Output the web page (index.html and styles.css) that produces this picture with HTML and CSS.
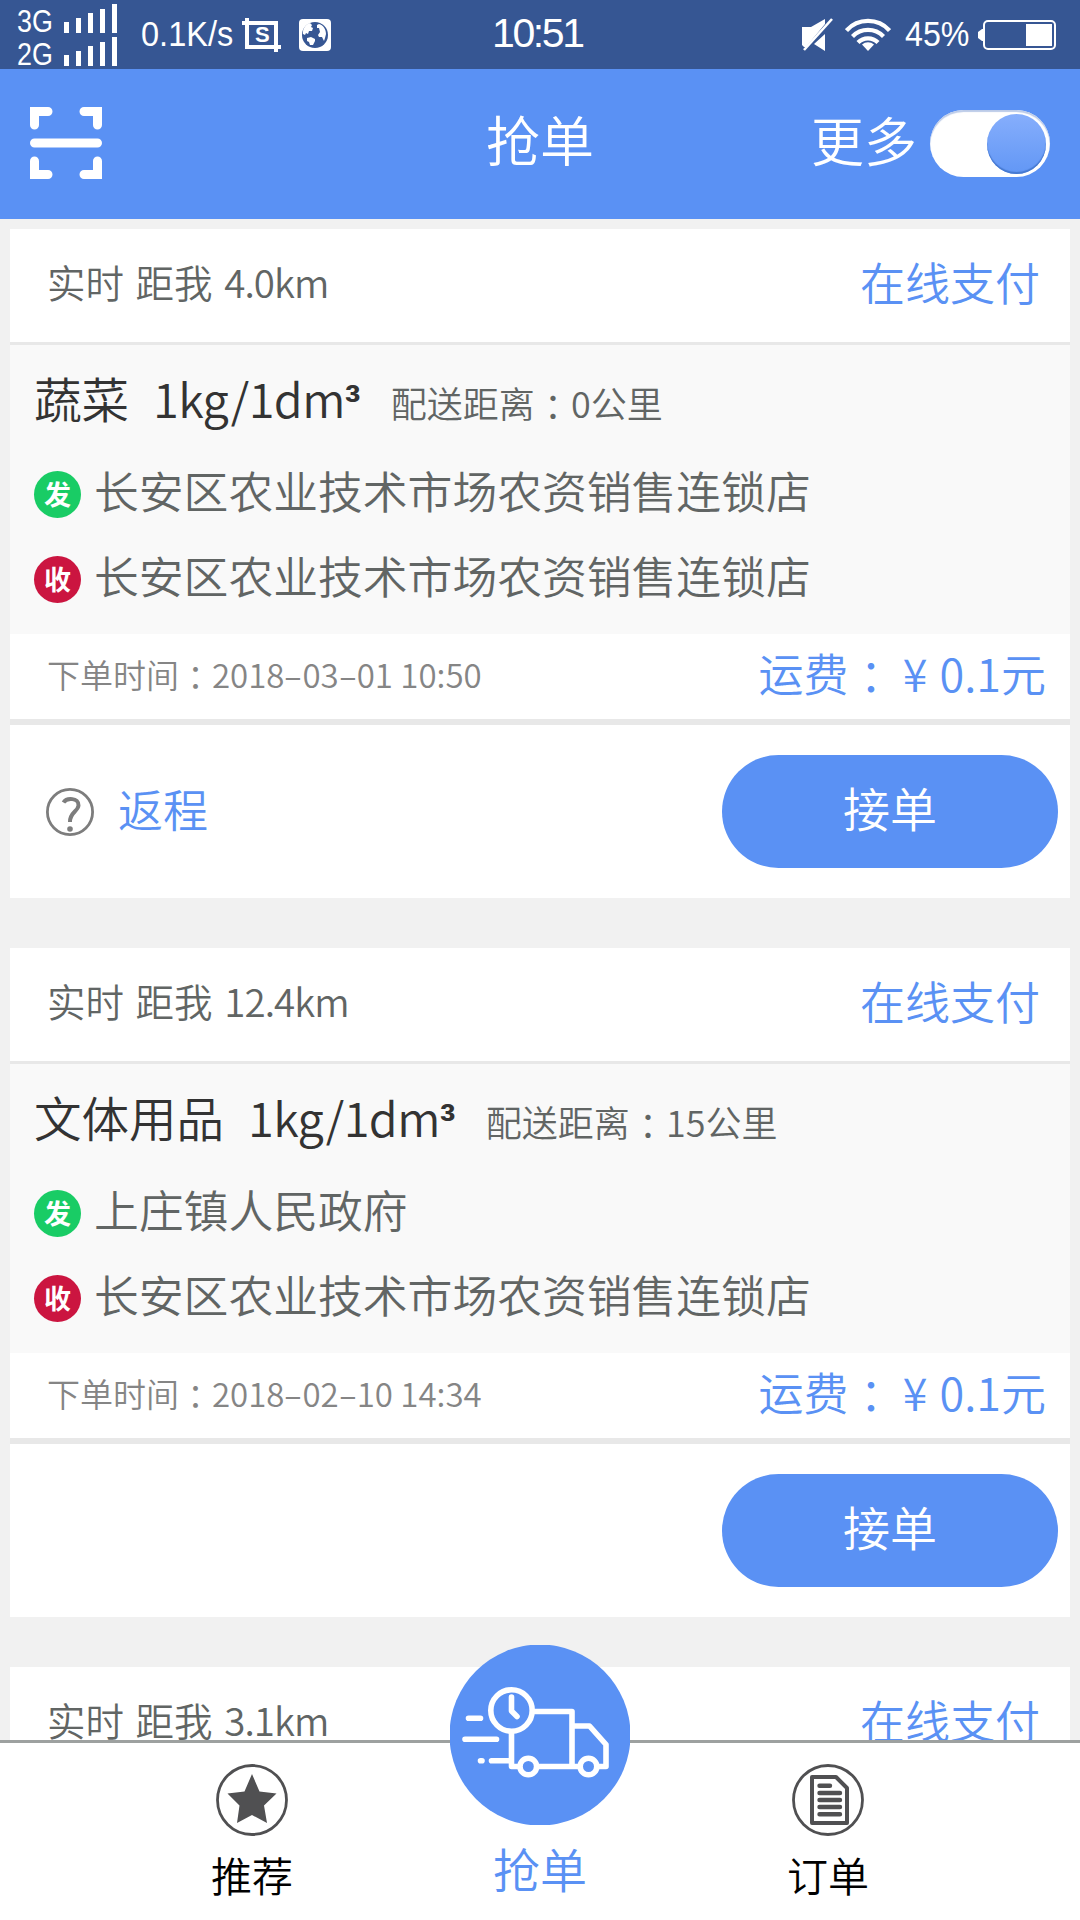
FILE: index.html
```html
<!DOCTYPE html>
<html lang="zh-CN">
<head>
  <meta charset="UTF-8">
  <meta name="viewport" content="width=device-width, initial-scale=1.0">
  <title>抢单</title>
  <link rel="stylesheet" href="styles.css">
</head>
<body>
  <div class="status-bar">
    <div class="signals">
      <div class="signal">
        <span class="net">3G</span>
        <svg width="53" height="29" viewBox="0 0 53 29" fill="#fff"><path d="M0 18h5v11H0zM12 14h5v15h-5zM24 9h5v20h-5zM36 5h5v24h-5zM48 0h5v29h-5z"/></svg>
      </div>
      <div class="signal">
        <span class="net">2G</span>
        <svg width="53" height="29" viewBox="0 0 53 29" fill="#fff"><path d="M0 18h5v11H0zM12 14h5v15h-5zM24 9h5v20h-5zM36 5h5v24h-5zM48 0h5v29h-5z"/></svg>
      </div>
    </div>
    <span class="speed">0.1K/s</span>
    <div class="shot">
      <svg width="39" height="34" viewBox="0 0 39 34" fill="none" stroke="#fff" stroke-width="4"><path d="M0 5h34v29M5 0v29h34"/></svg>
      <span>S</span>
    </div>
    <svg class="globe" width="32" height="32" viewBox="0 0 32 32">
      <rect width="32" height="32" rx="4" fill="#fff"/>
      <circle cx="16" cy="16" r="13" fill="#365693"/>
      <path fill="#fff" d="M4 13c0-4 3-8 7-9l2 2-1 2 2 1-1 3-3 0-1 3-2-1-1 2-2-1zM8 19l4-1 4 2 0 2-2 4-3 0-1-3-2-1zM20 5c4 1 7 5 7 10l-1 4-1 3-2-4-3 0-1-2 2-3-1-4-2 0 0-3z"/>
    </svg>
    <span class="clock">10:51</span>
    <div class="status-right">
      <svg class="mute" width="32" height="34" viewBox="0 0 32 34">
        <path fill="#fff" d="M0 9h9l14-8v5L4 29H2l-2-2zM23 16v17l-11-7z"/>
        <path stroke="#fff" stroke-width="2.6" d="M2 32L30 1"/>
      </svg>
      <svg class="wifi" width="46" height="34" viewBox="0 0 46 34" fill="none" stroke="#fff" stroke-width="4.2">
        <path d="M1.500 12.500a29 29 0 0 1 43 0M7.500 18.500a21.500 21.500 0 0 1 31 0M13 24.500a14 14 0 0 1 20 0"/>
        <path fill="#fff" stroke="none" d="M23 33l-6-6.500a9 9 0 0 1 12 0z"/>
      </svg>
      <span class="percent">45%</span>
      <svg width="78" height="30" viewBox="0 0 78 30">
        <path d="M5 9v12H4l-4-3v-6l4-3z" fill="#fff"/>
        <rect x="6" y="1" width="71" height="28" rx="4" fill="none" stroke="#fff" stroke-width="2"/>
        <path d="M48 4h26v22H48z" fill="#fff"/>
      </svg>
    </div>
  </div>

  <header class="header">
    <svg class="scan" width="72" height="72" viewBox="0 0 72 72" fill="none" stroke="#fff" stroke-width="9" stroke-linecap="round">
      <path d="M18 4.500H4.500V18M54 4.500h13.500V18M18 67.500H4.500V54M54 67.500h13.500V54M4.500 36h63"/>
    </svg>
    <h1>抢单</h1>
    <div class="more">
      <span>更多</span>
      <div class="toggle"><i class="knob"></i></div>
    </div>
  </header>

  <main class="orders">
    <section class="card">
      <div class="card-head">
        <span class="where">实时 距我 <span class="km">4.0km</span></span>
        <span class="pay">在线支付</span>
      </div>
      <div class="card-body">
        <div class="goods">
          <span class="name">蔬菜</span>
          <span class="size">1kg/1dm<b>³</b></span>
          <span class="distance">配送距离<span class="colon" lang="zh-TW">：</span>0公里</span>
        </div>
        <div class="addr"><b class="dot send">发</b><span>长安区农业技术市场农资销售连锁店</span></div>
        <div class="addr"><b class="dot recv">收</b><span>长安区农业技术市场农资销售连锁店</span></div>
      </div>
      <div class="card-time">
        <span class="time">下单时间<span class="colon" lang="zh-TW">：</span>2018<i>-</i>03<i>-</i>01 10:50</span>
        <span class="fee">运费<span class="colon" lang="zh-TW">：</span><span class="yen">¥</span>0.1元</span>
      </div>
      <div class="card-foot">
        <div class="back">
          <svg width="48" height="48" viewBox="0 0 48 48" fill="none" stroke="#7d7d7d">
            <circle cx="24" cy="24" r="22.600" stroke-width="2.800"/>
            <path d="M17.500 14.500c3-5 15.500-5 15 3-.5 6-9 7-8.500 16.500" stroke-width="4"/>
            <circle cx="24" cy="41" r="2.800" fill="#7d7d7d" stroke="none"/>
          </svg>
          <span>返程</span>
        </div>
        <button class="take">接单</button>
      </div>
    </section>

    <section class="card">
      <div class="card-head">
        <span class="where">实时 距我 <span class="km">12.4km</span></span>
        <span class="pay">在线支付</span>
      </div>
      <div class="card-body">
        <div class="goods">
          <span class="name">文体用品</span>
          <span class="size">1kg/1dm<b>³</b></span>
          <span class="distance">配送距离<span class="colon" lang="zh-TW">：</span>15公里</span>
        </div>
        <div class="addr"><b class="dot send">发</b><span>上庄镇人民政府</span></div>
        <div class="addr"><b class="dot recv">收</b><span>长安区农业技术市场农资销售连锁店</span></div>
      </div>
      <div class="card-time">
        <span class="time">下单时间<span class="colon" lang="zh-TW">：</span>2018<i>-</i>02<i>-</i>10 14:34</span>
        <span class="fee">运费<span class="colon" lang="zh-TW">：</span><span class="yen">¥</span>0.1元</span>
      </div>
      <div class="card-foot">
        <button class="take">接单</button>
      </div>
    </section>

    <section class="card">
      <div class="card-head">
        <span class="where">实时 距我 <span class="km">3.1km</span></span>
        <span class="pay">在线支付</span>
      </div>
    </section>
  </main>

  <nav class="tabs">
    <a class="tab">
      <svg width="72" height="72" viewBox="0 0 72 72">
        <circle cx="36" cy="36" r="34.500" fill="none" stroke="#505052" stroke-width="2.800"/>
        <path fill="#505052" d="M36 10l7.500 17.500 17 2-12.500 12 3 17.500-15-8-15 8 2.500-17.500-12-12 17-2z"/>
      </svg>
      <span>推荐</span>
    </a>
    <a class="tab active">
      <svg width="180" height="180" viewBox="0 0 180 180">
        <circle cx="90" cy="90" r="90.500" fill="#5a91f4"/>
        <g fill="none" stroke="#fff" stroke-width="5.600" stroke-linecap="round" stroke-linejoin="round">
          <circle cx="61.500" cy="65.500" r="20.700"/>
          <path d="M61.500 52v14l5.500 5.500M85 66.500h37v55M61.500 87v34.500h7M88 121.500h40M122 81h17.500l16.500 18.500v22h-7"/>
          <circle cx="78.300" cy="121.500" r="8.300"/>
          <circle cx="138.500" cy="121.500" r="8.300"/>
          <path d="M18.500 73.300h12M15 94.300h31.500M30.500 115.800h1.500M41.500 115.800h18"/>
        </g>
      </svg>
      <span>抢单</span>
    </a>
    <a class="tab">
      <svg width="72" height="72" viewBox="0 0 72 72" fill="none" stroke="#505052">
        <circle cx="36" cy="36" r="34.500" stroke-width="2.800"/>
        <path d="M20 13h24l11 11v35H20z" stroke-width="4" stroke-linejoin="round"/>
        <path d="M27.500 21.800H38M27.500 29h20.500M27.500 36h20.500M27.500 43h20.500M27.500 50.200h20.500" stroke-width="4.400" stroke-linecap="round"/>
      </svg>
      <span>订单</span>
    </a>
  </nav>
</body>
</html>
```
FILE: styles.css
```css
* {
  box-sizing: border-box;
}

body {
  margin: 0;
  height: 1920px;
  overflow: hidden;
  display: flex;
  flex-direction: column;
  background: #f1f1f1;
  color: #616564;
  font-family: "Noto Sans CJK SC", sans-serif;
  font-weight: 350;
  line-height: 1;
  white-space: nowrap;
}

svg {
  display: block;
  flex: none;
}

/* centered full-width colon */
.colon {
  display: inline-block;
  font-family: "Noto Sans CJK TC", sans-serif;
  transform: translateY(0.07em);
}

/* status bar */
.status-bar {
  position: relative;
  height: 69px;
  flex: none;
  display: flex;
  align-items: center;
  padding: 0 24px 0 17px;
  background: #365693;
  color: #fff;
  font-family: "Liberation Sans", Arial, sans-serif;
  font-weight: 400;
}

.signals {
  align-self: flex-start;
  padding-top: 4px;
}

.signal {
  display: flex;
  align-items: flex-end;
  height: 29px;
  margin-bottom: 4px;
}

.net {
  width: 47px;
  font-size: 32px;
  line-height: 23px;
  transform: scaleX(0.84);
  transform-origin: left;
}

.speed {
  width: 92px;
  margin-left: 24px;
  padding-bottom: 2px;
  font-size: 35px;
  transform: scaleX(0.93);
  transform-origin: left;
}

.shot {
  position: relative;
  margin-left: 9px;
}

.shot span {
  position: absolute;
  left: 13px;
  top: 6px;
  font-size: 22px;
  font-weight: 700;
}

.globe {
  margin-left: 18px;
}

.clock {
  position: absolute;
  left: 492px;
  top: 13px;
  font-size: 41px;
  letter-spacing: -2.4px;
}

.status-right {
  display: flex;
  align-items: center;
  margin-left: auto;
}

.wifi {
  margin-left: 11px;
}

.percent {
  width: 73px;
  margin-left: 14px;
  padding-bottom: 2px;
  font-size: 35px;
  transform: scaleX(0.92);
  transform-origin: left;
}

/* header */
.header {
  height: 150px;
  flex: none;
  display: grid;
  grid-template-columns: 1fr auto 1fr;
  align-items: center;
  padding: 0 30px 2px;
  background: #5a91f4;
  color: #fff;
}

h1 {
  margin: 0;
  padding-bottom: 8px;
  font-size: 54px;
  font-weight: 350;
}

.more {
  display: flex;
  align-items: center;
  justify-content: flex-end;
  gap: 13px;
  font-size: 53px;
}

.more span {
  padding-bottom: 8px;
}

.toggle {
  display: flex;
  justify-content: flex-end;
  width: 120px;
  height: 67px;
  padding: 4px;
  border-radius: 34px;
  background: #fff;
  box-shadow: inset 0 2px 1px #bccbe8;
}

.knob {
  width: 59px;
  height: 60px;
  border-radius: 50%;
  background: linear-gradient(#86aefc, #6297f5);
  box-shadow: inset 0 -2px 1px #4679d0;
}

/* orders */
.orders {
  flex: 1;
  min-height: 0;
  overflow: hidden;
  padding: 10px 10px 0;
}

.card {
  margin-bottom: 50px;
  background: #fff;
}

.card-head {
  display: flex;
  align-items: center;
  justify-content: space-between;
  height: 116px;
  padding: 0 30px 8px 37px;
  border-bottom: 3px solid #e8e8e8;
  font-size: 38.5px;
}

.where {
  word-spacing: 3px;
}

.km {
  letter-spacing: -0.9px;
}

.pay {
  padding-bottom: 1px;
  font-size: 45px;
  color: #5a91f4;
}

.card-body {
  height: 289px;
  padding: 29px 24px 0;
  background: #f9f9f9;
}

.goods {
  display: flex;
  align-items: baseline;
  height: 78px;
  font-size: 47.500px;
  color: #333;
}

.size {
  margin-left: 24px;
  font-size: 47px;
  letter-spacing: -0.6px;
}

.size b {
  font-family: "Liberation Sans", Arial, sans-serif;
}

.distance {
  margin-left: 31px;
  font-size: 36px;
  color: #616564;
}

.addr {
  display: flex;
  align-items: center;
  height: 85px;
  font-size: 44.8px;
}

.addr span {
  margin-left: 13px;
  padding-bottom: 8px;
}

.dot {
  width: 47px;
  height: 47px;
  border-radius: 50%;
  color: #fff;
  font-size: 27px;
  font-weight: 700;
  line-height: 45px;
  text-align: center;
}

.send {
  background: #19cc65;
}

.recv {
  background: #cb1540;
}

.card-time {
  display: flex;
  align-items: center;
  justify-content: space-between;
  height: 91px;
  padding: 0 24px 4px 37px;
  border-bottom: 6px solid #e8e8e8;
  font-size: 33px;
  color: #858585;
}

/* wide dash between the date parts */
.time i {
  display: inline-block;
  width: 18px;
  text-align: center;
  font-style: normal;
  transform: scaleX(1.7);
}

.fee {
  padding-bottom: 4px;
  font-size: 45px;
  color: #5a91f4;
}

.yen {
  display: inline-block;
  width: 46px;
  padding-right: 3px;
  text-align: center;
}

.card-foot {
  display: flex;
  align-items: center;
  height: 173px;
  padding: 0 12px 0 36px;
}

.back {
  display: flex;
  align-items: center;
  gap: 24px;
  font-size: 45px;
  color: #5a91f4;
}

.back span {
  padding-bottom: 6px;
}

.take {
  width: 336px;
  height: 113px;
  margin-left: auto;
  padding: 0 0 10px;
  border: 0;
  border-radius: 57px;
  background: #5a91f4;
  color: #fff;
  font: inherit;
  font-size: 47px;
}

/* bottom tabs */
.tabs {
  position: relative;
  display: flex;
  flex: none;
  height: 180px;
  padding: 0 108px;
  border-top: 3px solid #9da1a0;
  background: #fff;
  color: #000;
}

.tab {
  display: flex;
  flex: 1;
  flex-direction: column;
  align-items: center;
  padding-top: 21px;
  font-size: 41px;
}

.tab span {
  margin-top: 18px;
}

.active {
  margin-top: -98px;
  padding-top: 0;
  font-size: 47px;
  color: #5a91f4;
}

.active span {
  margin-top: 19px;
}
```
